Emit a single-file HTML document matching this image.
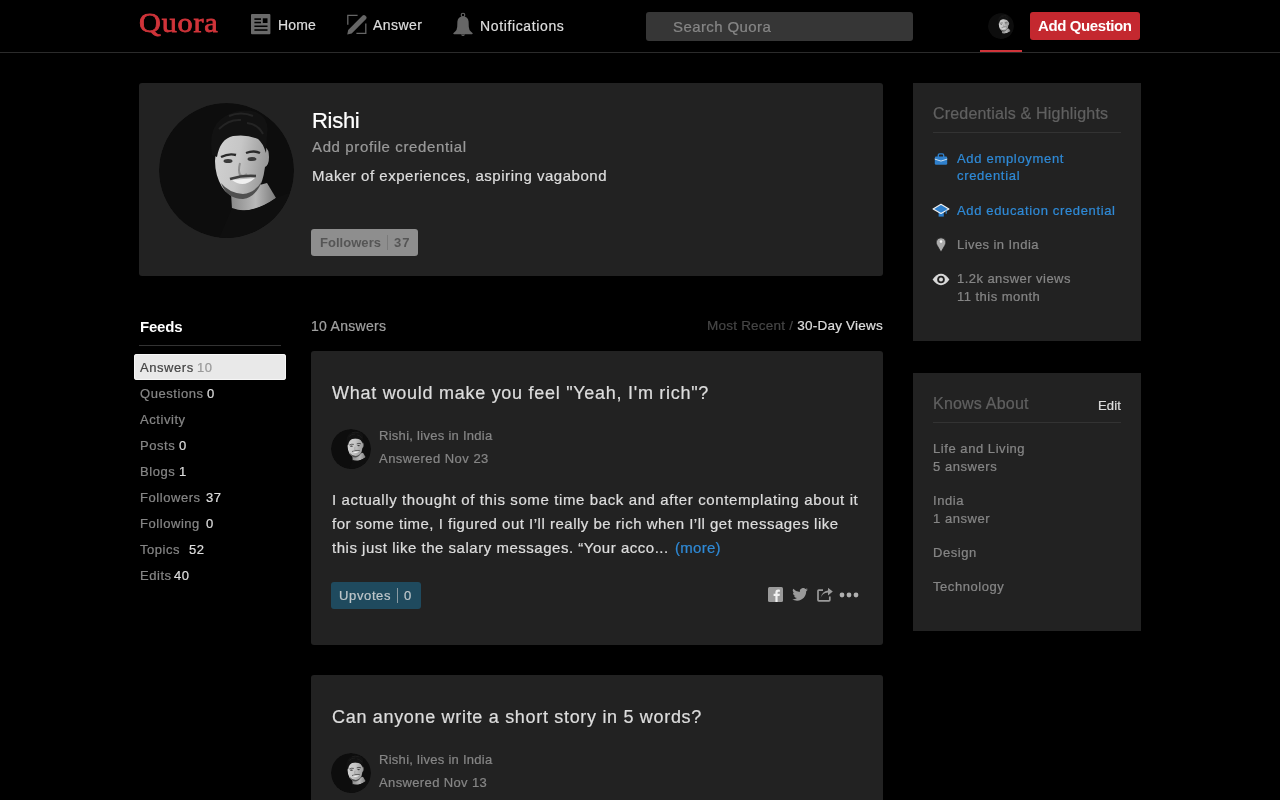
<!DOCTYPE html>
<html><head><meta charset="utf-8"><title>Rishi - Quora</title>
<style>
html,body{margin:0;padding:0;background:#000;width:1280px;height:800px;overflow:hidden}
body{position:relative;font-family:"Liberation Sans",sans-serif;}
.t{position:absolute;white-space:nowrap;will-change:transform;-webkit-text-stroke:0.22px currentColor;font-family:"Liberation Sans",sans-serif}
.b{position:absolute}
.ic{position:absolute;display:block}
.av{position:absolute;border-radius:50%;overflow:hidden}
</style></head><body>
<div class="b" style="left:0px;top:52px;width:1280px;height:1px;background:#2b2b2b;border-radius:0px;"></div>
<div class="t" style="left:139.30px;top:6.42px;font-size:27.2px;line-height:35px;color:#d0343a;letter-spacing:0.750px;font-family:'Liberation Serif', serif;-webkit-text-stroke:0.8px #d0343a;transform:scaleX(1.11);transform-origin:0 0;">Quora</div>
<div class="t" style="left:277.80px;top:16.05px;font-size:14px;line-height:18px;color:#dddddd;letter-spacing:0.140px;">Home</div>
<div class="t" style="left:373.20px;top:16.05px;font-size:14px;line-height:18px;color:#dddddd;letter-spacing:0.422px;">Answer</div>
<div class="t" style="left:479.50px;top:16.55px;font-size:14px;line-height:18px;color:#dddddd;letter-spacing:0.631px;">Notifications</div>
<div class="b" style="left:646px;top:12px;width:267px;height:29px;background:#363636;border-radius:3px;"></div>
<div class="t" style="left:672.80px;top:16.60px;font-size:15px;line-height:20px;color:#868686;letter-spacing:0.405px;">Search Quora</div>
<div class="b" style="left:980px;top:50px;width:42px;height:2px;background:#d0343a;border-radius:0px;"></div>
<div class="b" style="left:1030px;top:12px;width:110px;height:28px;background:#c4282f;border-radius:3px;"></div>
<div class="t" style="left:1038.00px;top:15.80px;font-size:15px;line-height:20px;color:#ffffff;letter-spacing:-0.393px;font-weight:bold;-webkit-text-stroke:0;">Add Question</div>
<div class="b" style="left:139px;top:83px;width:744px;height:193px;background:#222222;border-radius:3px;"></div>
<div class="t" style="left:311.60px;top:106.48px;font-size:22px;line-height:29px;color:#ffffff;letter-spacing:-0.288px;">Rishi</div>
<div class="t" style="left:311.60px;top:136.60px;font-size:15px;line-height:20px;color:#999999;letter-spacing:0.623px;">Add profile credential</div>
<div class="t" style="left:311.60px;top:165.80px;font-size:15px;line-height:20px;color:#dddddd;letter-spacing:0.533px;">Maker of experiences, aspiring vagabond</div>
<div class="b" style="left:311px;top:229px;width:107px;height:27px;background:#8e8e8e;border-radius:3px;"></div>
<div class="t" style="left:319.50px;top:234.10px;font-size:13px;line-height:17px;color:#555555;letter-spacing:0.036px;font-weight:bold;-webkit-text-stroke:0;">Followers</div>
<div class="b" style="left:387px;top:235px;width:1px;height:15px;background:#7a7a7a;border-radius:0px;"></div>
<div class="t" style="left:393.60px;top:234.10px;font-size:13px;line-height:17px;color:#555555;letter-spacing:0.970px;font-weight:bold;-webkit-text-stroke:0;">37</div>
<div class="b" style="left:913px;top:83px;width:228px;height:258px;background:#222222;border-radius:0px;"></div>
<div class="t" style="left:933.30px;top:102.96px;font-size:16px;line-height:21px;color:#606060;letter-spacing:0.186px;">Credentials & Highlights</div>
<div class="b" style="left:933px;top:132px;width:188px;height:1px;background:#333333;border-radius:0px;"></div>
<div class="t" style="left:957.00px;top:150.00px;font-size:13px;line-height:17px;color:#2f8ad6;letter-spacing:0.687px;">Add employment</div>
<div class="t" style="left:957.00px;top:167.30px;font-size:13px;line-height:17px;color:#2f8ad6;letter-spacing:0.687px;">credential</div>
<div class="t" style="left:957.30px;top:201.70px;font-size:13px;line-height:17px;color:#2f8ad6;letter-spacing:0.647px;">Add education credential</div>
<div class="t" style="left:957.00px;top:236.40px;font-size:13px;line-height:17px;color:#868686;letter-spacing:0.429px;">Lives in India</div>
<div class="t" style="left:957.00px;top:270.20px;font-size:13px;line-height:17px;color:#868686;letter-spacing:0.449px;">1.2k answer views</div>
<div class="t" style="left:957.00px;top:288.00px;font-size:13px;line-height:17px;color:#868686;letter-spacing:0.476px;">11 this month</div>
<div class="b" style="left:913px;top:373px;width:228px;height:258px;background:#222222;border-radius:0px;"></div>
<div class="t" style="left:933.00px;top:393.36px;font-size:16px;line-height:21px;color:#606060;letter-spacing:0.206px;">Knows About</div>
<div class="t" style="left:1098.00px;top:397.20px;font-size:13px;line-height:17px;color:#dddddd;letter-spacing:0.192px;">Edit</div>
<div class="b" style="left:933px;top:422px;width:188px;height:1px;background:#333333;border-radius:0px;"></div>
<div class="t" style="left:933.00px;top:440.20px;font-size:13px;line-height:17px;color:#868686;letter-spacing:0.554px;">Life and Living</div>
<div class="t" style="left:933.00px;top:458.00px;font-size:13px;line-height:17px;color:#868686;letter-spacing:0.554px;">5 answers</div>
<div class="t" style="left:933.00px;top:492.00px;font-size:13px;line-height:17px;color:#868686;letter-spacing:0.554px;">India</div>
<div class="t" style="left:933.00px;top:510.00px;font-size:13px;line-height:17px;color:#868686;letter-spacing:0.554px;">1 answer</div>
<div class="t" style="left:933.00px;top:544.00px;font-size:13px;line-height:17px;color:#868686;letter-spacing:0.554px;">Design</div>
<div class="t" style="left:933.00px;top:578.00px;font-size:13px;line-height:17px;color:#868686;letter-spacing:0.554px;">Technology</div>
<div class="t" style="left:139.70px;top:316.70px;font-size:15px;line-height:20px;color:#ffffff;letter-spacing:-0.213px;font-weight:bold;-webkit-text-stroke:0;">Feeds</div>
<div class="b" style="left:139px;top:345px;width:142px;height:1px;background:#333333;border-radius:0px;"></div>
<div class="b" style="left:134px;top:354px;width:152px;height:26px;background:#e9e9e9;border-radius:3px;box-shadow:inset 0 0 0 1px #f6f6f6;"></div>
<div class="t" style="left:139.60px;top:359.00px;font-size:13px;line-height:17px;color:#444444;letter-spacing:0.554px;">Answers</div>
<div class="t" style="left:197.49px;top:359.00px;font-size:13px;line-height:17px;color:#999999;letter-spacing:0.554px;">10</div>
<div class="t" style="left:139.60px;top:385.00px;font-size:13px;line-height:17px;color:#868686;letter-spacing:0.554px;">Questions</div>
<div class="t" style="left:207.28px;top:385.00px;font-size:13px;line-height:17px;color:#dddddd;letter-spacing:0.554px;">0</div>
<div class="t" style="left:139.60px;top:411.00px;font-size:13px;line-height:17px;color:#868686;letter-spacing:0.554px;">Activity</div>
<div class="t" style="left:139.60px;top:437.00px;font-size:13px;line-height:17px;color:#868686;letter-spacing:0.554px;">Posts</div>
<div class="t" style="left:179.05px;top:437.00px;font-size:13px;line-height:17px;color:#dddddd;letter-spacing:0.554px;">0</div>
<div class="t" style="left:139.60px;top:463.00px;font-size:13px;line-height:17px;color:#868686;letter-spacing:0.554px;">Blogs</div>
<div class="t" style="left:179.05px;top:463.00px;font-size:13px;line-height:17px;color:#dddddd;letter-spacing:0.554px;">1</div>
<div class="t" style="left:139.60px;top:489.00px;font-size:13px;line-height:17px;color:#868686;letter-spacing:0.554px;">Followers</div>
<div class="t" style="left:206.30px;top:489.00px;font-size:13px;line-height:17px;color:#dddddd;letter-spacing:0.554px;">37</div>
<div class="t" style="left:139.60px;top:515.00px;font-size:13px;line-height:17px;color:#868686;letter-spacing:0.554px;">Following</div>
<div class="t" style="left:206.00px;top:515.00px;font-size:13px;line-height:17px;color:#dddddd;letter-spacing:0.554px;">0</div>
<div class="t" style="left:139.60px;top:541.00px;font-size:13px;line-height:17px;color:#868686;letter-spacing:0.554px;">Topics</div>
<div class="t" style="left:189.00px;top:541.00px;font-size:13px;line-height:17px;color:#dddddd;letter-spacing:0.554px;">52</div>
<div class="t" style="left:139.60px;top:567.00px;font-size:13px;line-height:17px;color:#868686;letter-spacing:0.554px;">Edits</div>
<div class="t" style="left:174.00px;top:567.00px;font-size:13px;line-height:17px;color:#dddddd;letter-spacing:0.554px;">40</div>
<div class="t" style="left:311.30px;top:317.25px;font-size:14px;line-height:18px;color:#a0a0a0;letter-spacing:0.291px;">10 Answers</div>
<div class="t" style="left:706.70px;top:317.32px;font-size:13.5px;line-height:18px;color:#464646;letter-spacing:0.228px;">Most Recent / <span style="color:#dddddd">30-Day Views</span></div>
<div class="b" style="left:311px;top:351px;width:572px;height:294px;background:#222222;border-radius:3px;"></div>
<div class="t" style="left:331.70px;top:381.96px;font-size:18px;line-height:23px;color:#dddddd;letter-spacing:0.723px;">What would make you feel "Yeah, I'm rich"?</div>
<div class="av" style="left:331px;top:429px;width:40px;height:40px"><svg width="100%" height="100%" viewBox="0 0 135 135" style="display:block">
<defs><clipPath id="c1"><circle cx="67.5" cy="67.5" r="67.5"/></clipPath>
<linearGradient id="g1" x1="0" y1="0" x2="1" y2="0.2"><stop offset="0" stop-color="#d2d2d2"/><stop offset="0.5" stop-color="#c6c6c6"/><stop offset="1" stop-color="#9a9a9a"/></linearGradient>
<linearGradient id="n1" x1="0" y1="0" x2="1" y2="0"><stop offset="0" stop-color="#8a8a8a"/><stop offset="0.55" stop-color="#b8b8b8"/><stop offset="1" stop-color="#7a7a7a"/></linearGradient>
<radialGradient id="b1" cx="0.5" cy="0.5" r="0.5"><stop offset="0.6" stop-color="#555" stop-opacity="0.9"/><stop offset="1" stop-color="#555" stop-opacity="0"/></radialGradient></defs>
<g clip-path="url(#c1)">
<rect width="135" height="135" fill="#0d0d0d"/>
<path d="M72 90 L73 106 Q92 112 117 95 L108 80 Z" fill="url(#n1)"/>
<path d="M58 140 L73 105 Q92 113 117 95 L140 86 L140 140 Z" fill="#0f0f0f"/>
<path d="M57 46 Q60 32 80 31 Q101 30 106 44 Q110 46 110 54 Q110 62 106 64 Q104 80 98 88 Q90 95 82 95 Q69 94 63 84 Q56 72 56 58 Z" fill="url(#g1)"/>
<path d="M62 80 Q68 96 84 96 Q97 94 103 78 Q96 90 84 91 Q70 90 62 80 Z" fill="#505050"/>
<path d="M53 52 Q49 26 62 16 Q78 4 97 9 Q111 15 108 32 L107 50 Q104 40 99 36 Q88 31 74 33 Q61 36 58 54 Z" fill="#121212"/>
<path d="M60 26 Q70 16 82 17 M70 13 Q82 8 94 13 M88 20 Q99 21 104 31" stroke="#242424" stroke-width="2" fill="none"/>
<path d="M62 54 Q70 50 77 52" stroke="#2a2a2a" stroke-width="2.4" fill="none"/>
<path d="M87 50 Q95 47 101 50" stroke="#2a2a2a" stroke-width="2.4" fill="none"/>
<ellipse cx="69" cy="58" rx="4.5" ry="2" fill="#3a3a3a"/>
<ellipse cx="93" cy="56" rx="4.5" ry="2" fill="#3a3a3a"/>
<path d="M81 60 Q79 68 81 72 Q85 74 88 71" stroke="#8e8e8e" stroke-width="2" fill="none"/>
<path d="M71 76 Q84 72 97 73" stroke="#3e3e3e" stroke-width="2.6" fill="none"/>
<path d="M73 77 Q84 86 96 75 Z" fill="#f0f0f0"/>
</g></svg></div>
<div class="t" style="left:379.40px;top:427.00px;font-size:13px;line-height:17px;color:#868686;letter-spacing:0.280px;">Rishi, lives in India</div>
<div class="t" style="left:379.40px;top:450.00px;font-size:13px;line-height:17px;color:#868686;letter-spacing:0.480px;">Answered Nov 23</div>
<div class="t" style="left:331.60px;top:489.80px;font-size:15px;line-height:20px;color:#dddddd;letter-spacing:0.612px;">I actually thought of this some time back and after contemplating about it</div>
<div class="t" style="left:331.60px;top:513.55px;font-size:15px;line-height:20px;color:#dddddd;letter-spacing:0.501px;">for some time, I figured out I’ll really be rich when I’ll get messages like</div>
<div class="t" style="left:331.60px;top:537.80px;font-size:15px;line-height:20px;color:#dddddd;letter-spacing:0.520px;">this just like the salary messages. “Your acco...</div>
<div class="t" style="left:674.50px;top:537.80px;font-size:15px;line-height:20px;color:#2f8ad6;letter-spacing:0.265px;">(more)</div>
<div class="b" style="left:331px;top:582px;width:90px;height:27px;background:#1f4a5e;border-radius:3px;"></div>
<div class="t" style="left:339.20px;top:587.00px;font-size:13px;line-height:17px;color:#bec6ca;letter-spacing:0.632px;">Upvotes</div>
<div class="b" style="left:397px;top:588px;width:1px;height:15px;background:#8a9aa2;border-radius:0px;"></div>
<div class="t" style="left:404.00px;top:587.00px;font-size:13px;line-height:17px;color:#bec6ca;letter-spacing:0.000px;">0</div>

<svg class="ic" style="left:768px;top:587px" width="15" height="15" viewBox="0 0 15 15"><rect width="15" height="15" rx="1.5" fill="#9a9a9a"/><path d="M9.6 15 V9 H11.6 L11.9 6.8 H9.6 V5.5 Q9.6 4.7 10.4 4.7 H11.9 V2.7 Q11.2 2.6 10.2 2.6 Q7.4 2.6 7.4 5.4 V6.8 H5.6 V9 H7.4 V15 Z" fill="#f0f0f0"/></svg>
<svg class="ic" style="left:792px;top:588px" width="16" height="13" viewBox="0 0 24 20"><path d="M24 2.4 a9.8 9.8 0 0 1 -2.8 .8 4.9 4.9 0 0 0 2.2 -2.7 9.8 9.8 0 0 1 -3.1 1.2 4.9 4.9 0 0 0 -8.4 4.5 A14 14 0 0 1 1.7 1 a4.9 4.9 0 0 0 1.5 6.6 4.9 4.9 0 0 1 -2.2 -.6 4.9 4.9 0 0 0 3.9 4.8 4.9 4.9 0 0 1 -2.2 .1 4.9 4.9 0 0 0 4.6 3.4 A9.9 9.9 0 0 1 0 17.3 14 14 0 0 0 7.5 19.5 c9.1 0 14 -7.5 14 -14 v-.6 A10 10 0 0 0 24 2.4z" fill="#9a9a9a"/></svg>
<svg class="ic" style="left:817px;top:588px" width="17" height="14" viewBox="0 0 17 14"><path d="M6 2.2 H1.8 Q1 2.2 1 3 V12 Q1 12.8 1.8 12.8 H12 Q12.8 12.8 12.8 12 V8.5" stroke="#9a9a9a" stroke-width="1.7" fill="none"/><path d="M3.6 10.2 Q4.8 5.2 11 4.6 V7.6 L15.8 3.6 L11 -0.2 V2.6 Q5 3.2 3.6 10.2 Z" fill="#9a9a9a"/></svg>
<svg class="ic" style="left:838px;top:591px" width="22" height="8" viewBox="0 0 22 8"><circle cx="4" cy="4" r="2.4" fill="#b0b0b0"/><circle cx="11" cy="4" r="2.4" fill="#b0b0b0"/><circle cx="18" cy="4" r="2.4" fill="#b0b0b0"/></svg>
<div class="b" style="left:311px;top:675px;width:572px;height:294px;background:#222222;border-radius:3px;"></div>
<div class="t" style="left:331.70px;top:705.96px;font-size:18px;line-height:23px;color:#dddddd;letter-spacing:0.686px;">Can anyone write a short story in 5 words?</div>
<div class="av" style="left:331px;top:753px;width:40px;height:40px"><svg width="100%" height="100%" viewBox="0 0 135 135" style="display:block">
<defs><clipPath id="c2"><circle cx="67.5" cy="67.5" r="67.5"/></clipPath>
<linearGradient id="g2" x1="0" y1="0" x2="1" y2="0.2"><stop offset="0" stop-color="#d2d2d2"/><stop offset="0.5" stop-color="#c6c6c6"/><stop offset="1" stop-color="#9a9a9a"/></linearGradient>
<linearGradient id="n2" x1="0" y1="0" x2="1" y2="0"><stop offset="0" stop-color="#8a8a8a"/><stop offset="0.55" stop-color="#b8b8b8"/><stop offset="1" stop-color="#7a7a7a"/></linearGradient>
<radialGradient id="b2" cx="0.5" cy="0.5" r="0.5"><stop offset="0.6" stop-color="#555" stop-opacity="0.9"/><stop offset="1" stop-color="#555" stop-opacity="0"/></radialGradient></defs>
<g clip-path="url(#c2)">
<rect width="135" height="135" fill="#0d0d0d"/>
<path d="M72 90 L73 106 Q92 112 117 95 L108 80 Z" fill="url(#n2)"/>
<path d="M58 140 L73 105 Q92 113 117 95 L140 86 L140 140 Z" fill="#0f0f0f"/>
<path d="M57 46 Q60 32 80 31 Q101 30 106 44 Q110 46 110 54 Q110 62 106 64 Q104 80 98 88 Q90 95 82 95 Q69 94 63 84 Q56 72 56 58 Z" fill="url(#g2)"/>
<path d="M62 80 Q68 96 84 96 Q97 94 103 78 Q96 90 84 91 Q70 90 62 80 Z" fill="#505050"/>
<path d="M53 52 Q49 26 62 16 Q78 4 97 9 Q111 15 108 32 L107 50 Q104 40 99 36 Q88 31 74 33 Q61 36 58 54 Z" fill="#121212"/>
<path d="M60 26 Q70 16 82 17 M70 13 Q82 8 94 13 M88 20 Q99 21 104 31" stroke="#242424" stroke-width="2" fill="none"/>
<path d="M62 54 Q70 50 77 52" stroke="#2a2a2a" stroke-width="2.4" fill="none"/>
<path d="M87 50 Q95 47 101 50" stroke="#2a2a2a" stroke-width="2.4" fill="none"/>
<ellipse cx="69" cy="58" rx="4.5" ry="2" fill="#3a3a3a"/>
<ellipse cx="93" cy="56" rx="4.5" ry="2" fill="#3a3a3a"/>
<path d="M81 60 Q79 68 81 72 Q85 74 88 71" stroke="#8e8e8e" stroke-width="2" fill="none"/>
<path d="M71 76 Q84 72 97 73" stroke="#3e3e3e" stroke-width="2.6" fill="none"/>
<path d="M73 77 Q84 86 96 75 Z" fill="#f0f0f0"/>
</g></svg></div>
<div class="t" style="left:379.40px;top:751.00px;font-size:13px;line-height:17px;color:#868686;letter-spacing:0.280px;">Rishi, lives in India</div>
<div class="t" style="left:379.40px;top:774.00px;font-size:13px;line-height:17px;color:#868686;letter-spacing:0.369px;">Answered Nov 13</div>

<svg class="ic" style="left:251px;top:14px" width="20" height="21" viewBox="0 0 20 21"><rect x="0" y="0" width="19.4" height="20.3" rx="1" fill="#6a6a6a"/><rect x="3.4" y="4.3" width="6.6" height="1.6" fill="#000"/><rect x="3.4" y="7.75" width="6.6" height="1.55" fill="#000"/><rect x="11.8" y="4.3" width="4.7" height="4.7" fill="#000"/><rect x="3.4" y="11.5" width="13.1" height="1.5" fill="#000"/><rect x="3.4" y="15.25" width="13.1" height="1.55" fill="#000"/></svg>
<svg class="ic" style="left:346px;top:14px" width="22" height="22" viewBox="0 0 22 22"><path d="M1.8 10.8 V1.3 H11.6" stroke="#666" stroke-width="1.3" fill="none"/><path d="M10.4 19.4 H19.8 V9.6" stroke="#666" stroke-width="1.3" fill="none"/><path d="M1.2 20.4 L2.2 15.9 L16.6 1.5 Q17.9 0.3 19.2 1.5 L20.1 2.4 Q21.3 3.7 20.1 5 L5.7 19.4 Z" fill="#666"/></svg>
<svg class="ic" style="left:452px;top:12px" width="22" height="25" viewBox="0 0 22 25"><circle cx="11" cy="3" r="1.8" stroke="#666" stroke-width="1.1" fill="none"/><path d="M11 4.4 Q6 4.4 5.4 9.5 L5.2 15 Q4.9 18 3.2 19.5 Q1.4 20.8 1.2 21.6 Q1.3 22.3 2.2 22.3 H19.8 Q20.7 22.3 20.8 21.6 Q20.6 20.8 18.8 19.5 Q17.1 18 16.8 15 L16.6 9.5 Q16 4.4 11 4.4 Z" fill="#666"/><path d="M8.8 22.4 Q11 25.6 13.2 22.4 Z" fill="#666"/></svg>
<div class="av" style="left:988px;top:13px;width:26px;height:26px"><svg width="100%" height="100%" viewBox="0 0 135 135" style="display:block">
<defs><clipPath id="ch"><circle cx="67.5" cy="67.5" r="67.5"/></clipPath>
<linearGradient id="gh" x1="0" y1="0" x2="1" y2="0.2"><stop offset="0" stop-color="#d2d2d2"/><stop offset="0.5" stop-color="#c6c6c6"/><stop offset="1" stop-color="#9a9a9a"/></linearGradient>
<linearGradient id="nh" x1="0" y1="0" x2="1" y2="0"><stop offset="0" stop-color="#8a8a8a"/><stop offset="0.55" stop-color="#b8b8b8"/><stop offset="1" stop-color="#7a7a7a"/></linearGradient>
<radialGradient id="bh" cx="0.5" cy="0.5" r="0.5"><stop offset="0.6" stop-color="#555" stop-opacity="0.9"/><stop offset="1" stop-color="#555" stop-opacity="0"/></radialGradient></defs>
<g clip-path="url(#ch)">
<rect width="135" height="135" fill="#0d0d0d"/>
<path d="M72 90 L73 106 Q92 112 117 95 L108 80 Z" fill="url(#nh)"/>
<path d="M58 140 L73 105 Q92 113 117 95 L140 86 L140 140 Z" fill="#0f0f0f"/>
<path d="M57 46 Q60 32 80 31 Q101 30 106 44 Q110 46 110 54 Q110 62 106 64 Q104 80 98 88 Q90 95 82 95 Q69 94 63 84 Q56 72 56 58 Z" fill="url(#gh)"/>
<path d="M62 80 Q68 96 84 96 Q97 94 103 78 Q96 90 84 91 Q70 90 62 80 Z" fill="#505050"/>
<path d="M53 52 Q49 26 62 16 Q78 4 97 9 Q111 15 108 32 L107 50 Q104 40 99 36 Q88 31 74 33 Q61 36 58 54 Z" fill="#121212"/>
<path d="M60 26 Q70 16 82 17 M70 13 Q82 8 94 13 M88 20 Q99 21 104 31" stroke="#242424" stroke-width="2" fill="none"/>
<path d="M62 54 Q70 50 77 52" stroke="#2a2a2a" stroke-width="2.4" fill="none"/>
<path d="M87 50 Q95 47 101 50" stroke="#2a2a2a" stroke-width="2.4" fill="none"/>
<ellipse cx="69" cy="58" rx="4.5" ry="2" fill="#3a3a3a"/>
<ellipse cx="93" cy="56" rx="4.5" ry="2" fill="#3a3a3a"/>
<path d="M81 60 Q79 68 81 72 Q85 74 88 71" stroke="#8e8e8e" stroke-width="2" fill="none"/>
<path d="M71 76 Q84 72 97 73" stroke="#3e3e3e" stroke-width="2.6" fill="none"/>
<path d="M73 77 Q84 86 96 75 Z" fill="#f0f0f0"/>
</g></svg></div>
<div class="av" style="left:159px;top:103px;width:135px;height:135px"><svg width="100%" height="100%" viewBox="0 0 135 135" style="display:block">
<defs><clipPath id="cb"><circle cx="67.5" cy="67.5" r="67.5"/></clipPath>
<linearGradient id="gb" x1="0" y1="0" x2="1" y2="0.2"><stop offset="0" stop-color="#d2d2d2"/><stop offset="0.5" stop-color="#c6c6c6"/><stop offset="1" stop-color="#9a9a9a"/></linearGradient>
<linearGradient id="nb" x1="0" y1="0" x2="1" y2="0"><stop offset="0" stop-color="#8a8a8a"/><stop offset="0.55" stop-color="#b8b8b8"/><stop offset="1" stop-color="#7a7a7a"/></linearGradient>
<radialGradient id="bb" cx="0.5" cy="0.5" r="0.5"><stop offset="0.6" stop-color="#555" stop-opacity="0.9"/><stop offset="1" stop-color="#555" stop-opacity="0"/></radialGradient></defs>
<g clip-path="url(#cb)">
<rect width="135" height="135" fill="#0d0d0d"/>
<path d="M72 90 L73 106 Q92 112 117 95 L108 80 Z" fill="url(#nb)"/>
<path d="M58 140 L73 105 Q92 113 117 95 L140 86 L140 140 Z" fill="#0f0f0f"/>
<path d="M57 46 Q60 32 80 31 Q101 30 106 44 Q110 46 110 54 Q110 62 106 64 Q104 80 98 88 Q90 95 82 95 Q69 94 63 84 Q56 72 56 58 Z" fill="url(#gb)"/>
<path d="M62 80 Q68 96 84 96 Q97 94 103 78 Q96 90 84 91 Q70 90 62 80 Z" fill="#505050"/>
<path d="M53 52 Q49 26 62 16 Q78 4 97 9 Q111 15 108 32 L107 50 Q104 40 99 36 Q88 31 74 33 Q61 36 58 54 Z" fill="#121212"/>
<path d="M60 26 Q70 16 82 17 M70 13 Q82 8 94 13 M88 20 Q99 21 104 31" stroke="#242424" stroke-width="2" fill="none"/>
<path d="M62 54 Q70 50 77 52" stroke="#2a2a2a" stroke-width="2.4" fill="none"/>
<path d="M87 50 Q95 47 101 50" stroke="#2a2a2a" stroke-width="2.4" fill="none"/>
<ellipse cx="69" cy="58" rx="4.5" ry="2" fill="#3a3a3a"/>
<ellipse cx="93" cy="56" rx="4.5" ry="2" fill="#3a3a3a"/>
<path d="M81 60 Q79 68 81 72 Q85 74 88 71" stroke="#8e8e8e" stroke-width="2" fill="none"/>
<path d="M71 76 Q84 72 97 73" stroke="#3e3e3e" stroke-width="2.6" fill="none"/>
<path d="M73 77 Q84 86 96 75 Z" fill="#f0f0f0"/>
</g></svg></div>
<svg class="ic" style="left:934px;top:153px" width="14" height="13" viewBox="0 0 14 13"><path d="M4.3 4 V2.3 Q4.3 0.9 5.7 0.9 H8.3 Q9.7 0.9 9.7 2.3 V4" stroke="#2f80cc" stroke-width="1.4" fill="none"/><rect x="0.8" y="3.6" width="12.4" height="8.2" rx="1.3" fill="#2f80cc"/><path d="M0.8 6.1 L7 8.1 L13.2 6.1" stroke="#cfe0ef" stroke-width="1" fill="none"/></svg>
<svg class="ic" style="left:932px;top:203px" width="18" height="15" viewBox="0 0 18 15"><path d="M6.6 9 V13.6 H11.8 V9 Z" fill="#2f80cc"/><path d="M9 1.3 L16.9 5.9 L9 10.4 L1.1 5.9 Z" fill="#2f80cc" stroke="#f0f0f0" stroke-width="1.2" stroke-linejoin="round"/><path d="M14.2 7.6 V10.8" stroke="#2f80cc" stroke-width="1.2"/></svg>
<svg class="ic" style="left:935px;top:237px" width="12" height="16" viewBox="0 0 12 16"><path d="M6 15.2 L2 8.2 Q1 6.4 1.2 4.8 Q1.8 0.8 6 0.8 Q10.2 0.8 10.8 4.8 Q11 6.4 10 8.2 Z" fill="#ababab" stroke="#141414" stroke-width="0.7"/><circle cx="6" cy="4.6" r="1.3" fill="#f4f4f4"/></svg>
<svg class="ic" style="left:932px;top:273px" width="18" height="13" viewBox="0 0 18 13"><path d="M0.6 6.5 Q4.6 0.8 9 0.8 Q13.4 0.8 17.4 6.5 Q13.4 12.2 9 12.2 Q4.6 12.2 0.6 6.5 Z" fill="#d8d8d8"/><circle cx="9" cy="6.5" r="3.8" fill="#222"/><circle cx="9" cy="6.5" r="2" fill="#d8d8d8"/></svg>

</body></html>
